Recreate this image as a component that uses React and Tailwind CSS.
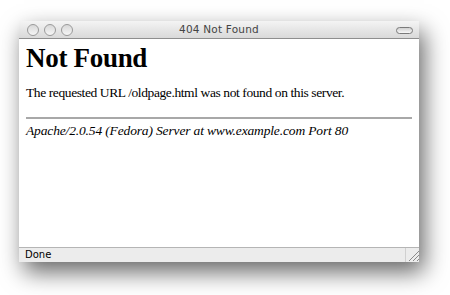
export default function App() {
  return (
    <div className="w-[450px] h-[295px] bg-white pt-[21px] pl-[19px]">
      <div className="w-[400px] h-[241px] flex flex-col bg-white shadow-[5px_10px_22px_rgba(0,0,0,0.6)]">
        <div className="relative h-[18px] flex items-center justify-center bg-gradient-to-b from-[#f4f4f4] to-[#d9d9d9] border-b border-[#8e8e8e]">
          <div className="absolute left-[8px] top-[3px] flex gap-[5px]">
            <div className="w-[12px] h-[12px] rounded-full border border-[#9a9a9a] bg-gradient-to-b from-[#d8d8d8] to-[#f6f6f6]" />
            <div className="w-[12px] h-[12px] rounded-full border border-[#9a9a9a] bg-gradient-to-b from-[#d8d8d8] to-[#f6f6f6]" />
            <div className="w-[12px] h-[12px] rounded-full border border-[#9a9a9a] bg-gradient-to-b from-[#d8d8d8] to-[#f6f6f6]" />
          </div>
          <span className="text-[10.5px] leading-none text-[#444] font-['DejaVu_Sans',sans-serif] tracking-[0.2px]">404 Not Found</span>
          <div className="absolute right-[6px] top-[6px] w-[17px] h-[7px] rounded-full border border-[#7a7a7a] bg-gradient-to-b from-[#d0d0d0] to-[#f8f8f8]" />
        </div>
        <div className="flex-1 px-[7px] pt-[2px] font-['Liberation_Serif',serif] text-black">
          <h1 className="text-[27px] font-bold leading-[34px] tracking-[-0.3px]">Not Found</h1>
          <p className="mt-[10px] text-[13.5px] leading-[16px] tracking-[-0.4px]">The requested URL /oldpage.html was not found on this server.</p>
          <hr className="mt-[16px] border-t-2 border-[#a8a8a8]" />
          <address className="mt-[4px] text-[13.5px] leading-[16px] italic tracking-[-0.15px]">Apache/2.0.54 (Fedora) Server at www.example.com Port 80</address>
        </div>
        <div className="relative h-[15px] border-t border-[#b5b5b5] bg-[#ececec] flex items-center pl-[6px]">
          <span className="text-[10px] leading-none text-black font-['DejaVu_Sans',sans-serif]">Done</span>
          <div className="absolute right-0 top-0 h-[14px] w-[14px] border-l border-[#d0d0d0]">
            <svg width="14" height="14" viewBox="0 0 14 14">
              <path d="M3 13 L13 3 M7 13 L13 7 M11 13 L13 11" stroke="#8a8a8a" strokeWidth="1" />
            </svg>
          </div>
        </div>
      </div>
    </div>
  );
}
